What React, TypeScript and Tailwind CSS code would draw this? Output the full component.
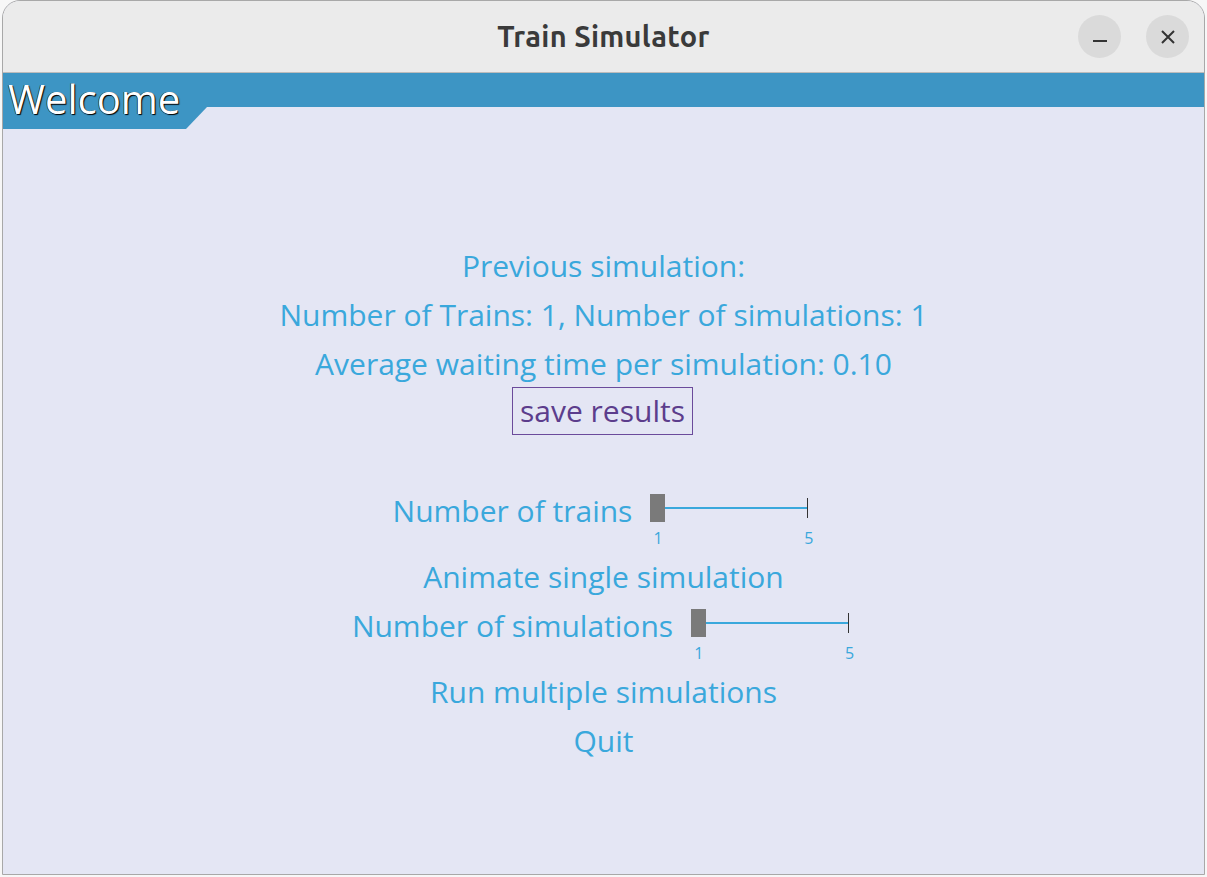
import React from "react";

const font = { fontFamily: '"Open Sans", "Noto Sans", sans-serif' };

function Slider({ width = 158 }: { width?: number }) {
  return (
    <div className="relative h-[49px]" style={{ width }}>
      <div className="absolute left-0 top-[8px] w-[15px] h-[28px] bg-[#7a7a7a]" />
      <div className="absolute left-[15px] right-[1px] top-[21px] h-[2px] bg-[#3aa8dc]" />
      <div className="absolute right-0 top-[12px] w-[1px] h-[20px] bg-[#333]" />
      <span className="absolute left-[3px] top-[43px] text-[16px] leading-[18px] text-[#3aa8dc]">1</span>
      <span className="absolute right-[-5px] top-[43px] text-[16px] leading-[18px] text-[#3aa8dc]">5</span>
    </div>
  );
}

function SliderRow({ label }: { label: string }) {
  return (
    <div className="h-[66px] flex justify-center items-start gap-[18px] pr-[6px]">
      <span className="leading-[49px]">{label}</span>
      <Slider />
    </div>
  );
}

export default function App() {
  return (
    <main className="w-[1207px] h-[877px] bg-[#f7f7f7] overflow-hidden relative" style={font}>
      <div className="ml-[2px] w-[1203px] h-[875px] rounded-t-[18px] border border-[#a8a8a8] bg-[#e4e6f4] overflow-hidden flex flex-col">
        <header className="h-[72px] shrink-0 bg-[#ebebeb] border-b border-[#bcbcbc] flex items-center justify-center relative">
          <h1 className="text-[29px] font-bold text-[#3a3a3a] tracking-[0.3px]" style={{ fontFamily: '"Ubuntu", "Open Sans", sans-serif' }}>
            Train Simulator
          </h1>
          <div className="absolute right-[15px] top-[14px] flex gap-[25px]">
            <button className="w-[43px] h-[43px] rounded-full bg-[#dadada] flex items-center justify-center">
              <span className="block w-[14px] h-[2px] bg-[#333] mt-[8px]" />
            </button>
            <button className="w-[43px] h-[43px] rounded-full bg-[#dadada] flex items-center justify-center">
              <svg width="16" height="16" viewBox="0 0 16 16" stroke="#333" strokeWidth="2">
                <path d="M2 2 L14 14 M14 2 L2 14" />
              </svg>
            </button>
          </div>
        </header>
        <div className="h-[34px] shrink-0 bg-[#3d95c4] relative">
          <svg className="absolute left-0 top-[33px]" width="205" height="24" viewBox="0 0 205 24">
            <polygon points="0,0 205,0 183,23 0,23" fill="#3d95c4" />
          </svg>
          <span
            className="absolute left-[5px] top-[4px] text-[40px] leading-[44px] text-white"
            style={{ textShadow: "1px 1px 1px #000, -0.5px 0 0 #000" }}
          >
            Welcome
          </span>
        </div>
        <section className="flex flex-col items-center text-[30px] text-[#3aa8dc] pt-[134px]">
          <p className="leading-[49px]">Previous simulation:</p>
          <p className="leading-[49px]">Number of Trains: 1, Number of simulations: 1</p>
          <p className="leading-[49px]">Average waiting time per simulation: 0.10</p>
          <div className="h-[49px] flex items-start">
            <button className="h-[48px] px-[7px] border border-[#6b4b9b] text-[#5c3d8c] leading-[44px] -mt-[1px] -ml-[2px]">
              save results
            </button>
          </div>
          <div className="h-[49px]" />
          <div className="w-full">
            <SliderRow label="Number of trains" />
          </div>
          <p className="leading-[49px]">Animate single simulation</p>
          <div className="w-full">
            <SliderRow label="Number of simulations" />
          </div>
          <p className="leading-[49px]">Run multiple simulations</p>
          <p className="leading-[49px]">Quit</p>
        </section>
      </div>
    </main>
  );
}
